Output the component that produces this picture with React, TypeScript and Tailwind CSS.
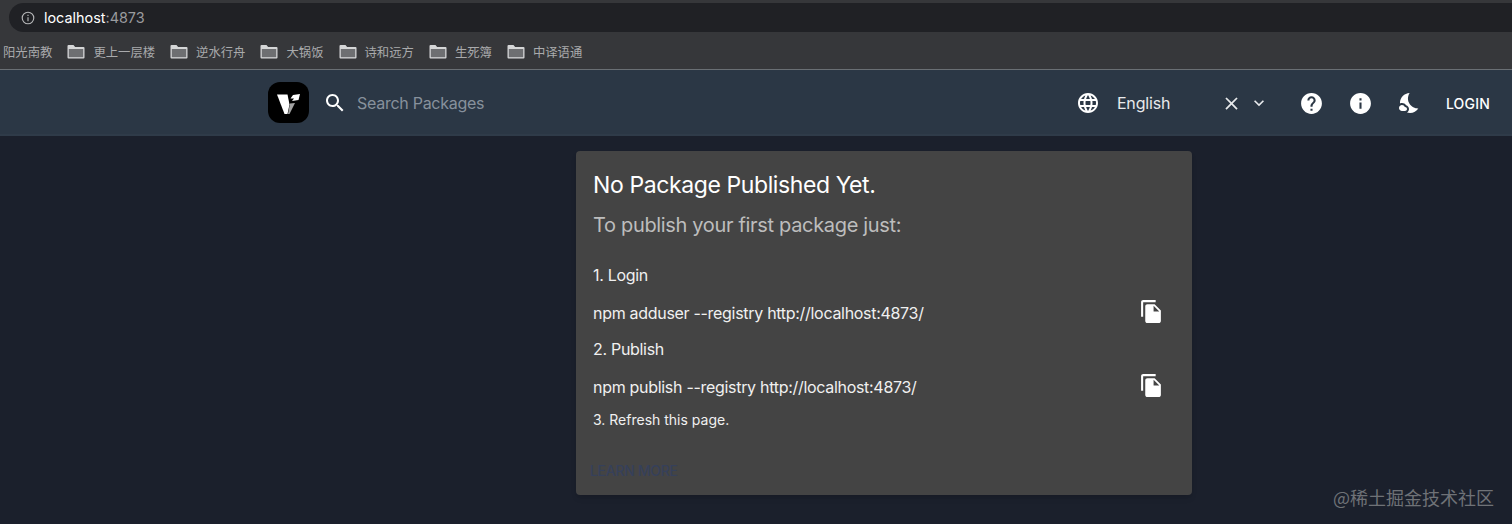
const ICONS = {
  search: "M15.5 14h-.79l-.28-.27C15.41 12.59 16 11.11 16 9.5 16 5.91 13.09 3 9.5 3S3 5.91 3 9.5 5.91 16 9.5 16c1.61 0 3.09-.59 4.23-1.57l.27.28v.79l5 4.99L20.49 19l-4.99-5zm-6 0C7.01 14 5 11.99 5 9.5S7.01 5 9.5 5 14 7.01 14 9.5 11.99 14 9.5 14z",
  language: "M11.99 2C6.47 2 2 6.48 2 12s4.47 10 9.99 10C17.52 22 22 17.52 22 12S17.52 2 11.99 2zm6.93 6h-2.95c-.32-1.25-.78-2.45-1.38-3.56 1.84.63 3.37 1.91 4.33 3.56zM12 4.04c.83 1.2 1.48 2.53 1.91 3.96h-3.82c.43-1.43 1.08-2.76 1.91-3.96zM4.26 14C4.1 13.36 4 12.69 4 12s.1-1.36.26-2h3.38c-.08.66-.14 1.32-.14 2 0 .68.06 1.34.14 2H4.26zm.82 2h2.95c.32 1.25.78 2.45 1.38 3.56-1.84-.63-3.37-1.9-4.33-3.56zm2.95-8H5.08c.96-1.66 2.49-2.93 4.33-3.56C8.81 5.55 8.35 6.75 8.03 8zM12 19.96c-.83-1.2-1.48-2.53-1.91-3.96h3.82c-.43 1.43-1.08 2.76-1.91 3.96zM14.34 14H9.66c-.09-.66-.16-1.32-.16-2 0-.68.07-1.35.16-2h4.68c.09.65.16 1.32.16 2 0 .68-.07 1.34-.16 2zm.25 5.56c.6-1.11 1.06-2.31 1.38-3.56h2.95c-.96 1.65-2.49 2.93-4.33 3.56zM16.36 14c.08-.66.14-1.32.14-2 0-.68-.06-1.34-.14-2h3.38c.16.64.26 1.31.26 2s-.1 1.36-.26 2h-3.38z",
  close: "M19 6.41 17.59 5 12 10.59 6.41 5 5 6.41 10.59 12 5 17.59 6.41 19 12 13.41 17.59 19 19 17.59 13.41 12z",
  expand: "M16.59 8.59 12 13.17 7.41 8.59 6 10l6 6 6-6z",
  help: "M12 2C6.48 2 2 6.48 2 12s4.48 10 10 10 10-4.48 10-10S17.52 2 12 2zm1 17h-2v-2h2v2zm2.07-7.75l-.9.92C13.45 12.9 13 13.5 13 15h-2v-.5c0-1.1.45-2.1 1.17-2.83l1.24-1.26c.37-.36.59-.86.59-1.41 0-1.1-.9-2-2-2s-2 .9-2 2H8c0-2.21 1.79-4 4-4s4 1.79 4 4c0 .88-.36 1.68-.93 2.25z",
  info: "M12 2C6.48 2 2 6.48 2 12s4.48 10 10 10 10-4.48 10-10S17.52 2 12 2zm1 15h-2v-6h2v6zm0-8h-2V7h2v2z",
  night: "M11.1 12.08c-2.33-4.51-.5-8.48.53-10.07C6.27 2.2 1.98 6.59 1.98 12c0 .14.02.28.02.42.62-.27 1.29-.42 2-.42 1.66 0 3.18.83 4.1 2.15 1.67.48 2.9 2.02 2.9 3.85 0 1.52-.87 2.83-2.12 3.51.98.32 2.03.5 3.11.5 3.5 0 6.58-1.8 8.37-4.52-2.36.23-6.98-.97-9.26-5.41zM7 16h-.18C6.4 14.84 5.3 14 4 14c-1.66 0-3 1.34-3 3s1.34 3 3 3h3c1.1 0 2-.9 2-2s-.9-2-2-2z",
  copy: "M16 1H4c-1.1 0-2 .9-2 2v14h2V3h12V1zm-1 4l6 6v10c0 1.1-.9 2-2 2H7.99C6.89 23 6 22.1 6 21l.01-14c0-1.1.89-2 1.99-2h7zm-1 7h5.5L14 6.5V12z",
}

function Icon({ d, className }: { d: string; className: string }) {
  return (
    <svg viewBox="0 0 24 24" fill="currentColor" className={className}>
      <path d={d} />
    </svg>
  )
}

function Folder() {
  return (
    <svg viewBox="0 0 18 15" className="w-[18px] h-[15px] shrink-0 mr-2">
      <path d="M1.5 1h5l1.6 2h8.4a1 1 0 0 1 1 1v9.5a1 1 0 0 1-1 1h-15a1 1 0 0 1-1-1V2a1 1 0 0 1 1-1z" fill="#d5d6d7" />
      <rect x="1.8" y="5" width="14.4" height="8.2" fill="#6e6f72" />
    </svg>
  )
}

function Bookmark({ label }: { label: string }) {
  return (
    <div className="flex items-center ml-[15px]">
      <Folder />
      <span>{label}</span>
    </div>
  )
}

function CommandRow({ text }: { text: string }) {
  return (
    <div className="flex items-center justify-between h-[37px] pr-[28px] text-[16px] tracking-[-0.3px] text-[#f0f0f0]">
      <span>{text}</span>
      <Icon d={ICONS.copy} className="w-[25px] h-[25px] -mt-[2px] text-white" />
    </div>
  )
}

export default function App() {
  return (
    <div className="relative h-[524px] w-[1512px] overflow-hidden bg-[#1b202c] font-['Inter','Noto_Sans_CJK_SC',sans-serif] text-white">
      <div className="h-[32px] pt-[3px] pl-[9px] bg-[#36373a]">
        <div className="flex items-center h-[29px] pl-[12px] rounded-l-[15px] bg-[#202125] text-[14.4px]">
          <svg viewBox="0 0 16 16" className="w-[14px] h-[14px] text-[#b5b6b8]" fill="none" stroke="currentColor" strokeWidth="1.3">
            <circle cx="8" cy="8" r="6.6" />
            <path d="M8 7v4.6M8 4.3v1.5" />
          </svg>
          <span className="ml-[9px]">localhost<span className="text-[#9a9b9e]">:4873</span></span>
        </div>
      </div>

      <div className="flex items-center h-[37px] pl-[3px] pt-[3px] bg-[#36373a] text-[12.35px] text-[#a9aaac] font-['Noto_Sans_CJK_SC',sans-serif]">
        <span>阳光南教</span>
        <Bookmark label="更上一层楼" />
        <Bookmark label="逆水行舟" />
        <Bookmark label="大锅饭" />
        <Bookmark label="诗和远方" />
        <Bookmark label="生死簿" />
        <Bookmark label="中译语通" />
      </div>

      <header className="flex items-center h-[67px] pt-[2px] pl-[268px] pr-[22px] bg-[#2b3745] border-t border-[#6a6f74] border-b-2 border-b-[#2f3b49]">
        <svg viewBox="0 0 41 41" className="w-[41px] h-[41px] -mt-[2px] shrink-0">
          <rect width="41" height="41" rx="12" fill="#000" />
          <path d="M9 12.5h10.5l2 10L19.5 32h-3z" fill="#fff" />
          <path d="M22 21.5l5-.5-5.5 11h-1.5z" fill="#a3a3a3" />
          <path d="M25 13l7-1-1.5 6-6.5 1 2-2.5h-3.5z" fill="#fff" />
        </svg>
        <Icon d={ICONS.search} className="w-[24px] h-[24px] ml-[14px] text-white" />
        <span className="ml-[10px] text-[16px] tracking-[-0.27px] text-[#87919c]">Search Packages</span>

        <Icon d={ICONS.language} className="w-[24px] h-[24px] ml-auto" />
        <span className="ml-[17px] w-[103px] text-[16px] tracking-[-0.15px] text-[#e8eaec]">English</span>
        <Icon d={ICONS.close} className="w-[21px] h-[21px] mx-[1.5px] text-[#e8eaec]" />
        <Icon d={ICONS.expand} className="w-[20px] h-[20px] ml-[5px] mr-[2px] text-[#e8eaec]" />
        <Icon d={ICONS.help} className="w-[25px] h-[25px] ml-[28px]" />
        <Icon d={ICONS.info} className="w-[25px] h-[25px] ml-[24px]" />
        <Icon d={ICONS.night} className="w-[24px] h-[24px] ml-[25px]" />
        <span className="ml-[24px] text-[14px] tracking-[0.2px] font-medium">LOGIN</span>
      </header>

      <main className="pl-[576px] pr-[320px] pt-[15px]">
        <div className="h-[344px] pt-[17px] pl-[17px] rounded bg-[#444444] shadow-md">
          <h2 className="h-[34px] leading-[34px] text-[23px] tracking-[-0.4px]">No Package Published Yet.</h2>
          <h3 className="h-[46px] leading-[46px] text-[20px] tracking-[-0.33px] text-[#bdbdbd]">To publish your first package just:</h3>
          <p className="mt-[9px] h-[37px] leading-[37px] text-[16px] tracking-[-0.3px] text-[#f0f0f0]">1. Login</p>
          <CommandRow text="npm adduser --registry http://localhost:4873/" />
          <p className="h-[37px] leading-[37px] text-[16px] tracking-[-0.3px] text-[#f0f0f0]">2. Publish</p>
          <CommandRow text="npm publish --registry http://localhost:4873/" />
          <p className="h-[30px] leading-[30px] text-[14px] text-[#f0f0f0]">3. Refresh this page.</p>
          <p className="mt-[22px] -ml-[3px] h-[28px] leading-[28px] text-[14px] tracking-[-0.3px] font-medium text-[#36405a]">LEARN MORE</p>
        </div>
      </main>

      <span className="absolute right-[18px] top-[484px] text-[18px] text-[#6f7277] font-['Noto_Sans_CJK_SC',sans-serif]">@稀土掘金技术社区</span>
    </div>
  )
}
